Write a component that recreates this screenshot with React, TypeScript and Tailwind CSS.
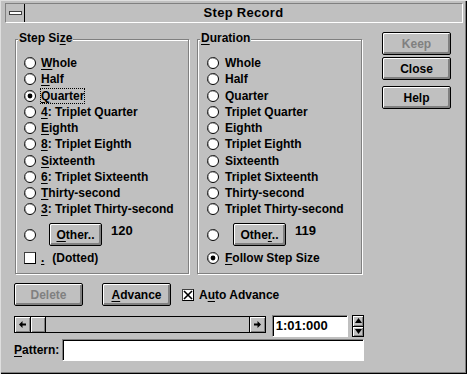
import React from "react";

const U = ({ children }: { children: React.ReactNode }) => (
	<span className="underline decoration-1 underline-offset-2">{children}</span>
);

function Radio({ on }: { on?: boolean }) {
	return (
		<svg width="12" height="12" viewBox="0 0 12 12" className="shrink-0">
			<circle cx="6" cy="6" r="5.5" fill="#fff" stroke="#000" />
			<path d="M2.3 8.6 A4.4 4.4 0 0 1 8.6 2.3" fill="none" stroke="#808080" />
			{on && <circle cx="6" cy="6" r="2.4" fill="#000" />}
		</svg>
	);
}

function Check({ on }: { on?: boolean }) {
	return (
		<div className="h-[12px] w-[12px] shrink-0 border border-black border-t-[#404040] border-l-[#404040] bg-white">
			{on && (
				<svg width="10" height="10" viewBox="0 0 10 10">
					<path d="M1 1 L9 9 M9 1 L1 9" stroke="#000" strokeWidth="1.6" />
				</svg>
			)}
		</div>
	);
}

function Btn({
	children,
	disabled,
	className = "",
}: {
	children: React.ReactNode;
	disabled?: boolean;
	className?: string;
}) {
	return (
		<div
			className={`flex h-[23px] shrink-0 items-center justify-center rounded-[2px] border border-black bg-[#c0c0c0] shadow-[inset_1px_1px_0_#fff,inset_-2px_-2px_0_#808080] ${
				disabled ? "text-[#808080]" : "text-black"
			} ${className}`}
		>
			{children}
		</div>
	);
}

function Row({
	on,
	gap,
	children,
}: {
	on?: boolean;
	gap: string;
	children: React.ReactNode;
}) {
	return (
		<div className="flex h-[16.25px] items-center">
			<Radio on={on} />
			<span className={`${gap} whitespace-nowrap leading-[16.25px]`}>{children}</span>
		</div>
	);
}

function Group({
	title,
	className,
	children,
}: {
	title: React.ReactNode;
	className: string;
	children: React.ReactNode;
}) {
	return (
		<div
			className={`relative h-[235px] shrink-0 border border-[#808080] shadow-[1px_1px_0_#fff,inset_1px_1px_0_#fff] ${className}`}
		>
			<div className="absolute -top-[9px] left-[2px] bg-[#c0c0c0] px-[1px] leading-[14px]">
				{title}
			</div>
			{children}
		</div>
	);
}

const stepSizes: React.ReactNode[] = [
	<><U>W</U>hole</>,
	<><U>H</U>alf</>,
	<span className="outline-1 outline-dotted outline-black"><U>Q</U>uarter</span>,
	<><U>4</U>: Triplet Quarter</>,
	<><U>E</U>ighth</>,
	<><U>8</U>: Triplet Eighth</>,
	<><U>S</U>ixteenth</>,
	<><U>6</U>: Triplet Sixteenth</>,
	<><U>T</U>hirty-second</>,
	<><U>3</U>: Triplet Thirty-second</>,
];

const durations = [
	"Whole",
	"Half",
	"Quarter",
	"Triplet Quarter",
	"Eighth",
	"Triplet Eighth",
	"Sixteenth",
	"Triplet Sixteenth",
	"Thirty-second",
	"Triplet Thirty-second",
];

function Arrow({ dir }: { dir: "left" | "right" }) {
	return (
		<svg width="7" height="7" viewBox="0 0 7 7" className={dir === "right" ? "rotate-180" : ""}>
			<path d="M0 3.5 L3.5 0 V2.5 H7 V4.5 H3.5 V7 Z" fill="#000" />
		</svg>
	);
}

export default function App() {
	return (
		<div
			className="relative flex h-[374px] w-[467px] flex-col bg-[#c0c0c0] text-[12px] font-bold text-black shadow-[inset_1px_1px_0_#dfdfdf,inset_-1px_-1px_0_#000,inset_-2px_-2px_0_#808080]"
			style={{ fontFamily: '"Liberation Sans", Arial, sans-serif' }}
		>
			{/* title bar */}
			<div className="ml-[5px] mt-[3px] flex h-[20px] w-[458px] border border-[#808080] border-b-white border-r-white">
				<div className="flex w-[19px] items-center justify-center border-r border-black">
					<div className="h-[4px] w-[13px] border border-[#404040] bg-white" />
				</div>
				<div className="flex flex-1 items-center justify-center text-[13px] tracking-[0.3px]">
					Step Record
				</div>
			</div>

			<div className="flex items-start pl-[14px]">
				{/* left part */}
				<div className="mt-[16px] flex w-[350px] flex-col">
					<div className="flex">
						<Group
							className="ml-[1px] w-[174px] pl-[8px] pt-[15px]"
							title={
								<>
									Step Si<U>z</U>e
								</>
							}
						>
							{stepSizes.map((s, i) => (
								<Row key={i} on={i === 2} gap="ml-[5px]">
									{s}
								</Row>
							))}
							<div className="mt-[5.5px] flex h-[23px] items-center">
								<Radio />
								<Btn className="ml-[13px] w-[53px]">
									<span>
										<U>O</U>ther..
									</span>
								</Btn>
								<span className="ml-[9px] self-start text-[13px] leading-[16px]">120</span>
							</div>
							<div className="mt-[4px] flex h-[16.25px] items-center">
								<Check />
								<span className="ml-[5px] leading-[16.25px]">
									<U>.</U>
									<span className="ml-[8px]">(Dotted)</span>
								</span>
							</div>
						</Group>

						<Group className="ml-[8px] w-[165px] pl-[9px] pt-[15px]" title={<><U>D</U>uration</>}>
							{durations.map((d) => (
								<Row key={d} gap="ml-[6px]">
									{d}
								</Row>
							))}
							<div className="mt-[5.5px] flex h-[23px] items-center">
								<Radio />
								<Btn className="ml-[14px] w-[53px]">
									<span>
										Othe<U>r</U>..
									</span>
								</Btn>
								<span className="ml-[9px] self-start text-[13px] leading-[16px]">119</span>
							</div>
							<div className="mt-[4px]">
								<Row on gap="ml-[6px]">
									<U>F</U>ollow Step Size
								</Row>
							</div>
						</Group>
					</div>

					{/* delete / advance */}
					<div className="mt-[9px] flex items-center">
						<Btn disabled className="w-[69px]">
							Delete
						</Btn>
						<Btn className="ml-[19px] w-[69px]">
							<span>
								<U>A</U>dvance
							</span>
						</Btn>
						<div className="ml-[11px]">
							<Check on />
						</div>
						<span className="ml-[5px]">
							A<U>u</U>to Advance
						</span>
					</div>

					{/* scroll + time */}
					<div className="mt-[9px] flex h-[22px] items-start">
						<div className="mt-[1px] flex h-[17px] w-[263px] border border-black">
							<div className="flex w-[16px] items-center justify-center border-r border-black shadow-[inset_1px_1px_0_#fff,inset_-1px_-1px_0_#808080]">
								<Arrow dir="left" />
							</div>
							<div className="w-[15px] border-r border-black shadow-[inset_1px_1px_0_#fff,inset_-1px_-1px_0_#808080]" />
							<div className="flex-1" />
							<div className="flex w-[16px] items-center justify-center border-l border-black shadow-[inset_1px_1px_0_#fff,inset_-1px_-1px_0_#808080]">
								<Arrow dir="right" />
							</div>
						</div>
						<div className="ml-[6px] flex h-[22px] w-[80px] items-center border border-[#808080] border-b-white border-r-white bg-white pl-[3px] text-[13px] shadow-[inset_1px_1px_0_#000]">
							1:01:000
						</div>
						<div className="ml-[4px] flex h-[22px] w-[12px] flex-col border border-black bg-[#c0c0c0]">
							<div className="flex flex-1 items-center justify-center border-b border-black shadow-[inset_1px_1px_0_#fff,inset_-1px_-1px_0_#808080]">
								<svg width="7" height="5" viewBox="0 0 7 5">
									<path d="M3.5 0 L7 5 H0 Z" fill="#000" />
								</svg>
							</div>
							<div className="flex flex-1 items-center justify-center shadow-[inset_1px_1px_0_#fff,inset_-1px_-1px_0_#808080]">
								<svg width="7" height="5" viewBox="0 0 7 5">
									<path d="M0 0 H7 L3.5 5 Z" fill="#000" />
								</svg>
							</div>
						</div>
					</div>

					{/* pattern */}
					<div className="mt-[2px] flex h-[22px] items-center">
						<span className="w-[48px]">
							<U>P</U>attern:
						</span>
						<div className="h-[22px] w-[302px] border border-[#808080] border-b-white border-r-white bg-white shadow-[inset_1px_1px_0_#000]" />
					</div>
				</div>

				{/* right buttons */}
				<div className="ml-[18px] mt-[9px] flex flex-col">
					<Btn disabled className="w-[69px]">
						Keep
					</Btn>
					<Btn className="mt-[2px] w-[69px]">Close</Btn>
					<Btn className="mt-[6px] w-[69px]">Help</Btn>
				</div>
			</div>
		</div>
	);
}
